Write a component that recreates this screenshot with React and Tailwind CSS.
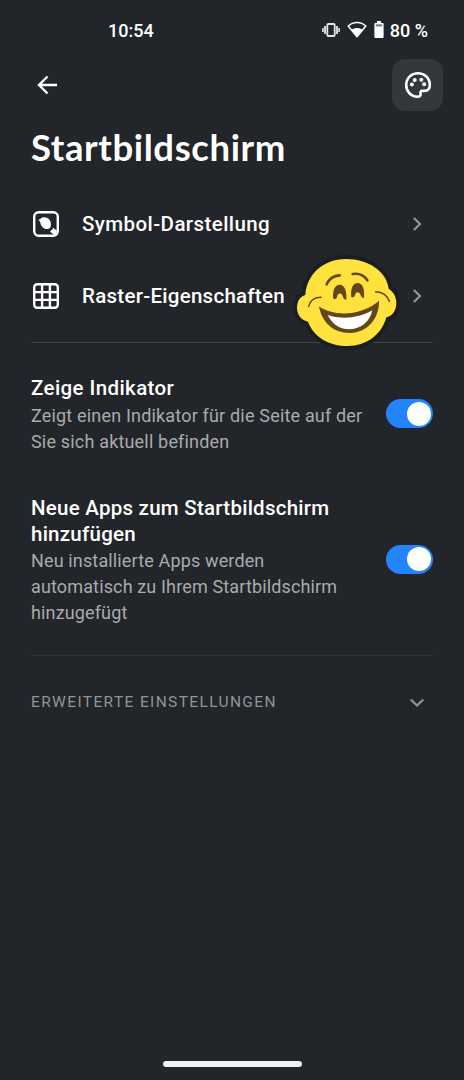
import { useState } from 'react';

const VibrateIcon = () => (
    <svg width="18" height="14" viewBox="0 0 18 14" fill="none" stroke="#e4e5e6">
        <rect x="5.3" y="1" width="7.4" height="12" rx="1" strokeWidth="1.8" />
        <path d="M3 3v8M15 3v8" strokeWidth="1.8" />
        <path d="M.9 5v4M17.1 5v4" strokeWidth="1.6" />
    </svg>
);

const WifiIcon = () => (
    <svg width="20" height="17" viewBox="0 0 20 17" fill="none">
        <path d="M1.2 5C6 .2 14 .2 18.8 5L10 15.8z" stroke="#fff" strokeWidth="1.5" strokeLinejoin="round" />
        <path d="M4.6 8.7C7.6 6.4 12.4 6.4 15.4 8.7L10 15.8z" fill="#fff" />
    </svg>
);

const BatteryIcon = () => (
    <svg width="10" height="17" viewBox="0 0 10 17" fill="none">
        <path d="M3 0h4v2h1.7a.9.9 0 0 1 .9.9V16a.9.9 0 0 1-.9.9H1.3a.9.9 0 0 1-.9-.9V2.9A.9.9 0 0 1 1.3 2H3z" fill="#fff" />
        <path d="M1.8 3.3h6.4v2.200H1.8z" fill="#7b7d80" />
    </svg>
);

const PaletteIcon = () => (
    <svg width="28" height="28" viewBox="0 0 28 28" fill="none">
        <path
            d="M14 2.2C7.3 2.2 2.2 7.3 2.2 14S7.3 25.8 13.5 25.8C15.8 25.8 17 24.5 16.6 22.7C16.3 20.8 16.5 19.9 18.5 19.9H20.5C23.800 19.9 25.8 17.6 25.8 14C25.8 7 20.7 2.2 14 2.2Z"
            stroke="#fff"
            strokeWidth="2.6"
            strokeLinejoin="round"
        />
        <g fill="#fff">
            <circle cx="7.9" cy="13.6" r="2" />
            <circle cx="10.7" cy="8.9" r="2" />
            <circle cx="17.3" cy="8.7" r="2" />
            <circle cx="20.1" cy="13.3" r="2" />
        </g>
    </svg>
);

const SymbolIcon = () => (
    <svg width="26" height="26" viewBox="0 0 26 26" fill="none">
        <rect x="1.2" y="1.2" width="23.6" height="23.6" rx="4.5" stroke="#fff" strokeWidth="2.4" />
        <path d="M5.3 9C7.4 8.3 8.1 6.4 11 6.3C15.8 6.1 18.7 10.4 17.8 15C17.5 16.8 16.2 18 14.3 18C10.8 18.2 8 15.5 7.3 11.5C7 10.3 6.3 9.6 5.3 9Z" fill="#fff" />
        <path d="M20 16.4l4.7 3.8v3.5l-2 1.3-5.7-4.3 1.2-1.7 1.3-.6z" fill="#fff" />
    </svg>
);

const GridIcon = () => (
    <svg width="26" height="26" viewBox="0 0 26 26" fill="none" stroke="#fff" strokeWidth="2.4">
        <rect x="1.2" y="1.2" width="23.6" height="23.6" rx="3" />
        <path d="M9.1 1v24M16.9 1v24M1 9.1h24M1 16.9h24" />
    </svg>
);

const LaughingFace = () => (
    <svg width="110" height="98" viewBox="36 36 330 294">
        <path
            d="M76 165C80 103 130 57 198 57C266 57 320 95 326 146C343 156 352 177 348 199C345 218 334 229 319 232C305 285 258 318 204 318C147 318 101 291 84 245C65 241 52 227 51 205C51 183 60 170 76 165Z"
            fill="#ffe23d"
            stroke="#1c1d21"
            strokeWidth="24"
            strokeLinejoin="round"
            paintOrder="stroke"
        />
        <g fill="none" stroke="#634719" strokeLinecap="round">
            <path d="M140 133C147 117 161 107 179 106" strokeWidth="8" />
            <path d="M218 102C237 99 252 106 262 121" strokeWidth="8" />
            <path d="M86 199C91 180 105 172 123 172" strokeWidth="4.5" />
            <path d="M287 155C306 156 322 166 328 184" strokeWidth="4.5" />
        </g>
        <path d="M160 176C157 150 165 134 179 134C194 134 201 153 199 179C193 179 191 176 189 171C186 158 174 157 171 170C170 175 166 179 160 176Z" fill="#634719" />
        <path d="M214 171C211 145 219 129 233 129C248 129 255 149 252 174C246 174 244 171 242 166C239 154 227 153 225 165C223 171 219 174 214 171Z" fill="#634719" />
        <path d="M117 199C160 231 245 228 297 182C299 234 263 277 211 279C160 280 126 248 117 199Z" fill="#634719" />
        <path d="M143 225C184 239 237 235 277 211C270 245 244 266 210 268C178 269 156 251 143 225Z" fill="#fff" />
    </svg>
);

const ChevronRight = () => (
    <svg width="10" height="16" viewBox="0 0 10 16" fill="none">
        <path d="M1.8 2L8 8L1.8 14" stroke="#909295" strokeWidth="2.3" />
    </svg>
);

const Toggle = ({ checked, onChange, label }) => (
    <button
        role="switch"
        aria-checked={checked}
        aria-label={label}
        onClick={onChange}
        className={`mb-[2px] flex h-[29px] w-[47px] shrink-0 items-center rounded-full px-[2px] ${checked ? 'justify-end bg-[#2484fb]' : 'justify-start bg-[#55585c]'}`}
    >
        <span className="h-[24px] w-[24px] rounded-full bg-white" />
    </button>
);

const App = () => {
    const [indicator, setIndicator] = useState(true);
    const [newApps, setNewApps] = useState(true);

    return (
        <div className="flex h-[1080px] w-[464px] flex-col overflow-hidden bg-[#222529] font-['Roboto','Noto_Sans',sans-serif] text-white">
            {/* Status bar */}
            <div className="flex h-[59px] shrink-0 items-center pr-[36px] pl-[108px]">
                <span className="pt-[2px] text-[18px] font-medium">10:54</span>
                <div className="ml-auto flex items-center">
                    <VibrateIcon />
                    <div className="ml-[7px]"><WifiIcon /></div>
                    <div className="ml-[7px]"><BatteryIcon /></div>
                    <span className="ml-[6px] pt-[2px] text-[18px] font-medium whitespace-nowrap">80 %</span>
                </div>
            </div>

            {/* Toolbar */}
            <div className="flex h-[52px] shrink-0 items-center justify-between pr-[21px] pl-[36px]">
                <button aria-label="Zurück">
                    <svg width="22" height="20" viewBox="0 0 22 20" fill="none" stroke="#fff" strokeWidth="2.4">
                        <path d="M21 10H3M11.5 1.5L3 10L11.5 18.5" />
                    </svg>
                </button>
                <button aria-label="Design" className="flex h-[52px] w-[51px] items-center justify-center rounded-[13px] bg-[#33363a]">
                    <PaletteIcon />
                </button>
            </div>

            <h1 className="mt-[12px] h-[49px] shrink-0 pl-[31px] font-['Lato','Noto_Sans',sans-serif] text-[36.5px] leading-[48px] font-bold tracking-[0.6px] whitespace-nowrap">
                Startbildschirm
            </h1>

            {/* Links */}
            <div className="mt-[16px] flex h-[72px] shrink-0 items-center pr-[42px] pl-[33px]">
                <SymbolIcon />
                <span className="ml-[23px] pt-px text-[20.5px] font-medium tracking-[0.42px] whitespace-nowrap">Symbol-Darstellung</span>
                <div className="ml-auto"><ChevronRight /></div>
            </div>
            <div className="relative flex h-[72px] shrink-0 items-center pr-[42px] pl-[33px]">
                <GridIcon />
                <span className="ml-[23px] pt-px text-[20.5px] font-medium tracking-[0.27px] whitespace-nowrap">Raster-Eigenschaften</span>
                <div className="ml-auto"><ChevronRight /></div>
                <div className="absolute top-[-8px] left-[292px]"><LaughingFace /></div>
            </div>

            <div className="mx-[31px] mt-[10px] h-px shrink-0 bg-[#3f4246]" />

            {/* Switches */}
            <div className="mt-[32px] flex shrink-0 items-center justify-between pr-[31px] pl-[31px]">
                <div>
                    <div className="h-[28px] text-[20.5px] leading-[26px] font-medium tracking-[0.4px] whitespace-nowrap">Zeige Indikator</div>
                    <div className="text-[18px] leading-[25.7px] tracking-[0.18px] whitespace-nowrap text-[#a9abad]">
                        <div>Zeigt einen Indikator für die Seite auf der</div>
                        <div>Sie sich aktuell befinden</div>
                    </div>
                </div>
                <Toggle label="Zeige Indikator" checked={indicator} onChange={() => setIndicator(!indicator)} />
            </div>
            <div className="mt-[41px] flex shrink-0 items-center justify-between pr-[31px] pl-[31px]">
                <div>
                    <div className="h-[53px] text-[20.5px] leading-[26px] font-medium tracking-[0.25px] whitespace-nowrap">
                        <div>Neue Apps zum Startbildschirm</div>
                        <div>hinzufügen</div>
                    </div>
                    <div className="text-[18px] leading-[25.7px] tracking-[0.14px] whitespace-nowrap text-[#a9abad]">
                        <div>Neu installierte Apps werden</div>
                        <div>automatisch zu Ihrem Startbildschirm</div>
                        <div>hinzugefügt</div>
                    </div>
                </div>
                <Toggle label="Neue Apps" checked={newApps} onChange={() => setNewApps(!newApps)} />
            </div>

            <div className="mx-[31px] mt-[29px] h-px shrink-0 bg-[#303337]" />

            {/* Advanced */}
            <button className="mt-[32px] flex h-[30px] shrink-0 items-center justify-between pr-[39px] pl-[31px]">
                <span className="pt-px text-[15.5px] tracking-[1.37px] whitespace-nowrap text-[#929497]">ERWEITERTE EINSTELLUNGEN</span>
                <svg width="16" height="10" viewBox="0 0 16 10" fill="none">
                    <path d="M1.7 1.5L8 7.5L14.3 1.5" stroke="#909295" strokeWidth="2.3" />
                </svg>
            </button>

            {/* Gesture bar */}
            <div className="mt-auto mb-[13px] h-[6px] w-[139px] shrink-0 self-center rounded-full bg-[#f1f1f2]" />
        </div>
    );
};

export default App;
